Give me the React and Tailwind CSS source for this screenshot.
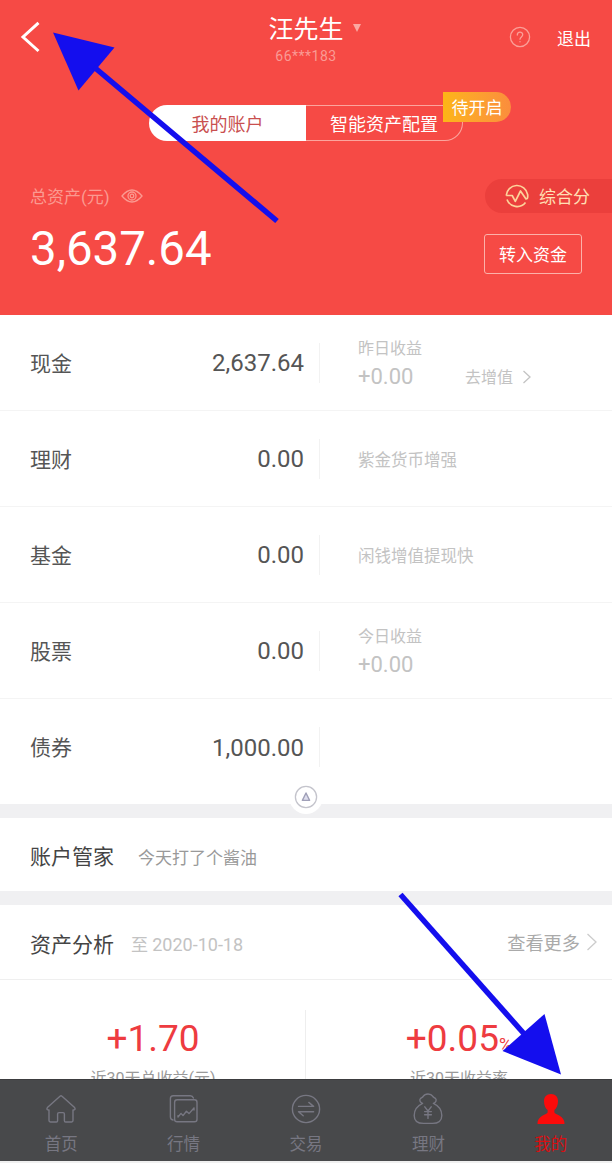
import clsx from 'clsx'

const rows = [
  { name: '现金', amount: '2,637.64', label: '昨日收益', gain: '+0.00', action: '去增值' },
  { name: '理财', amount: '0.00', note: '紫金货币增强' },
  { name: '基金', amount: '0.00', note: '闲钱增值提现快' },
  { name: '股票', amount: '0.00', label: '今日收益', gain: '+0.00' },
  { name: '债券', amount: '1,000.00' }
]

const tabs = [
  { label: '首页', Icon: HomeIcon },
  { label: '行情', Icon: MarketIcon },
  { label: '交易', Icon: TradeIcon },
  { label: '理财', Icon: MoneyBagIcon },
  { label: '我的', Icon: UserIcon, active: true }
]

function HomeIcon() {
  return (
    <svg width="32" height="32" viewBox="0 0 32 32" fill="none" stroke="currentColor" strokeWidth="1.4" strokeLinejoin="round">
      <path d="M15 3.2 Q16 2.4 17 3.2 L29.6 14.6 Q31 16.8 28.6 17 H28 V27.6 Q28 29 26.6 29 H20.6 Q19.4 29 19.4 27.8 V21 Q19.4 19.6 18 19.6 H14 Q12.6 19.6 12.6 21 V27.8 Q12.6 29 11.4 29 H5.4 Q4 29 4 27.6 V17 H3.4 Q1 16.8 2.4 14.6 Z" />
    </svg>
  )
}

function MarketIcon() {
  return (
    <svg width="32" height="32" viewBox="0 0 32 32" fill="none" stroke="currentColor" strokeWidth="1.4" strokeLinecap="round" strokeLinejoin="round">
      <rect x="6.6" y="6.8" width="22.4" height="22" rx="2.6" />
      <path d="M5 27 Q2.4 26.4 2.4 24 V5.6 Q2.4 2.8 5.2 2.8 H22.4 Q24.6 2.8 25.4 5" />
      <path d="M10 24 L13 20.4 L15 22.6 L18.4 18.2 L21 20.6 L26 15 M26 15 L26 17 M10 24 V22.6" />
    </svg>
  )
}

function TradeIcon() {
  return (
    <svg width="32" height="32" viewBox="0 0 32 32" fill="none" stroke="currentColor" strokeWidth="1.4" strokeLinecap="round" strokeLinejoin="round">
      <circle cx="16" cy="16" r="13.6" />
      <path d="M8.5 13.4 H23.6 L18.8 9.4" />
      <path d="M23.6 18.8 H8.5 L13.2 22.8" />
    </svg>
  )
}

function MoneyBagIcon() {
  return (
    <svg width="32" height="32" viewBox="0 0 32 32" fill="none" stroke="currentColor" strokeWidth="1.4" strokeLinecap="round" strokeLinejoin="round">
      <path d="M10.6 10.4 C8 9.4 7.2 7 8.4 5.6 C9.4 4.4 10.6 4.6 11.4 3.2 C12.4 1.4 13.6 1 16 1 C18.4 1 19.6 1.4 20.6 3.2 C21.4 4.6 22.6 4.4 23.6 5.6 C24.8 7 24 9.4 21.4 10.4 C26.5 12.8 29.8 17.6 29.8 22.4 C29.8 27.6 26.5 30.4 20.5 30.4 H11.5 C5.5 30.4 2.2 27.6 2.2 22.4 C2.2 17.6 5.5 12.8 10.6 10.4 Z" />
      <path d="M12.8 13.8 L16 18 L19.2 13.8 M16 18 V25.4 M12.6 18.6 H19.4 M12.6 21.8 H19.4" />
    </svg>
  )
}

function UserIcon() {
  return (
    <svg width="32" height="32" viewBox="0 0 32 32" fill="currentColor">
      <path d="M16 1 C20.5 1 23 4 23 8 C23 12 21.8 15.2 19.4 17 V19.4 C20 21.6 29.4 22 29.6 30.6 Q29.6 31 29 31 H3 Q2.4 31 2.4 30.6 C2.6 22 12 21.6 12.6 19.4 V17 C10.2 15.2 9 12 9 8 C9 4 11.5 1 16 1 Z" />
    </svg>
  )
}

function Header() {
  return (
    <header className="h-[315px] bg-[#f64a45] text-white">
      <div className="flex h-[74px] items-center">
        <div className="w-[204px] pl-5">
          <svg width="20" height="32" viewBox="0 0 20 32" fill="none" stroke="currentColor" strokeWidth="3">
            <path d="M18.5 1.8 L3 16 L18.5 30" />
          </svg>
        </div>
        <div className="flex w-[204px] flex-col items-center">
          <div className="relative mt-[5px] text-[25px] leading-8">
            汪先生
            <svg className="absolute top-[9px] left-[84px] text-[#fba8a1]" width="10" height="10" viewBox="0 0 10 10" fill="currentColor">
              <path d="M1 1 H9 L5 9 Z" />
            </svg>
          </div>
          <div className="text-sm leading-5 tracking-[0.5px] text-[#fa9a94]">66***183</div>
        </div>
        <div className="flex flex-1 items-center justify-end pr-[21px]">
          <svg className="mr-[26px] text-[#fb9f98]" width="22" height="22" viewBox="0 0 22 22" fill="none" stroke="currentColor" strokeWidth="1.3" strokeLinecap="round">
            <circle cx="11" cy="11" r="9.6" />
            <path d="M8.3 9 C8.3 5.3 13.7 5.3 13.7 8.8 C13.7 10.8 11 11 11 13.2 M11 15.6 V15.8" />
          </svg>
          <span className="pt-[3px] text-[17px] leading-6">退出</span>
        </div>
      </div>

      {/* Account switch */}
      <div className="mt-[31px] flex justify-center">
        <div className="relative flex h-9 w-[314px] text-lg">
          <div className="flex w-[157px] items-center justify-center rounded-l-full bg-white pt-[3px] text-[#c94f4f]">我的账户</div>
          <div className="flex w-[157px] items-center justify-center rounded-r-full border border-l-0 border-[#fba59d] pt-[3px]">智能资产配置</div>
          <div className="absolute -top-[13px] left-[294px] flex h-[30px] w-[68px] items-center justify-center rounded-tl-md rounded-r-full bg-linear-to-r from-[#fdb515] to-[#fb8d3c] pt-[2px] text-[17px]">
            待开启
          </div>
        </div>
      </div>

      {/* Total assets */}
      <div className="mt-[38px] flex justify-between pl-[30px]">
        <div>
          <div className="flex h-[34px] items-center text-[#fb9a91]">
            <span className="pt-[3px] text-[17px]">总资产(元)</span>
            <svg className="ml-[11px]" width="22" height="14" viewBox="0 0 22 14" fill="none" stroke="currentColor" strokeWidth="1.3">
              <path d="M1 7 Q11 -5 21 7 Q11 19 1 7 Z" />
              <circle cx="11" cy="7" r="4" />
              <circle cx="11" cy="7" r="1.8" />
            </svg>
          </div>
          <div className="mt-[8px] text-[47.4px] leading-[56px]">3,637.64</div>
        </div>
        <div className="flex flex-col items-end">
          <div className="flex h-[34px] w-[127px] items-center rounded-l-full bg-[#eb3f3c] pl-5 text-[17px] text-[#ffe0b5]">
            <svg className="mr-[10px] text-[#fdd39a]" width="24" height="24" viewBox="0 0 24 24" fill="none" stroke="currentColor" strokeWidth="1.7" strokeLinejoin="round">
              <path d="M1.2 11.5 A10.8 10.8 0 0 1 22.6 10.4 Q23 12.5 22.3 14.5 L21 15 L15.5 7 L10.3 17.3 L7.2 11.5 H1.2" />
              <path d="M2 15.5 A10.8 10.8 0 0 0 20.5 18.5" />
            </svg>
            <span className="pt-[4px]">综合分</span>
          </div>
          <div className="mt-[21px] mr-[30px] flex h-10 w-[98px] items-center justify-center rounded-[3px] border border-[#fcb1a9] pt-[3px] text-[17px]">
            转入资金
          </div>
        </div>
      </div>
    </header>
  )
}

function AssetRow({ row, last }) {
  return (
    <div className={clsx('flex h-24 items-center pl-[30px]', !last && 'border-b border-[#f4f4f4]')}>
      <div className="w-[100px] pt-[4px] text-[21px] text-[#555]">{row.name}</div>
      <div className="w-[174px] pt-px text-right text-2xl text-[#555]">{row.amount}</div>
      <div className="ml-[15px] h-10 w-px bg-[#f2f2f2]" />
      <div className="ml-[38px] flex-1 text-[#c3c3c3]">
        {row.note && <div className="pt-[5px] text-[16.5px]">{row.note}</div>}
        {row.label && <div className="pt-px text-base leading-7">{row.label}</div>}
        {row.gain && (
          <div className="flex items-center leading-7">
            <span className="w-[107px] text-[22px]">{row.gain}</span>
            {row.action && (
              <>
                <span className="pt-px text-base">{row.action}</span>
                <svg className="ml-[9px]" width="10" height="14" viewBox="0 0 10 14" fill="none" stroke="currentColor" strokeWidth="1.3">
                  <path d="M1.5 1 L8 7 L1.5 13" />
                </svg>
              </>
            )}
          </div>
        )}
      </div>
    </div>
  )
}

function Stat({ value, unit, label }) {
  return (
    <div className="flex flex-1 flex-col items-center pt-[37px]">
      <div className="flex h-[44px] items-baseline text-[37px] leading-[44px] text-[#ee3b40]">
        {value}
        {unit && <span className="text-[18px] leading-none">{unit}</span>}
      </div>
      <div className="mt-[6px] text-base leading-6 whitespace-nowrap text-[#999]">{label}</div>
    </div>
  )
}

export default function App() {
  return (
    <div className="relative flex h-[1163px] w-[612px] flex-col overflow-hidden bg-white font-[Roboto,'Noto_Sans_CJK_SC',sans-serif]">
      <Header />

      {/* Asset list */}
      <section className="relative h-[489px] shrink-0">
        {rows.map((row, i) => (
          <AssetRow key={row.name} row={row} last={i === rows.length - 1} />
        ))}
        <div className="absolute -bottom-[10px] left-[289px] flex h-[34px] w-[34px] items-center justify-center rounded-full bg-white">
          <svg width="24" height="24" viewBox="0 0 24 24" fill="none">
            <circle cx="12" cy="12" r="10.6" stroke="#c4c4cc" strokeWidth="1.3" />
            <path d="M12 8 L15.6 15.4 H8.4 Z" fill="#dedeee" stroke="#a0a0b8" strokeWidth="1.4" strokeLinejoin="round" />
          </svg>
        </div>
      </section>

      <div className="h-[14px] shrink-0 bg-[#f0f0f2]" />

      <section className="flex h-[73px] shrink-0 items-center pt-[7px] pl-[30px]">
        <h2 className="text-[21px] text-[#444]">账户管家</h2>
        <span className="ml-6 pt-px text-[17px] text-[#999]">今天打了个酱油</span>
      </section>

      <div className="h-[14px] shrink-0 bg-[#f0f0f2]" />

      {/* Asset analysis */}
      <section className="flex h-[75px] shrink-0 items-center border-b border-[#efefef] pr-[14px] pl-[30px]">
        <h2 className="pt-[7px] text-[21px] text-[#444]">资产分析</h2>
        <span className="ml-[17px] pt-[5px] text-[17px] text-[#c3c3c3]">
          至 <span className="text-[18px]">2020-10-18</span>
        </span>
        <span className="ml-auto pt-[4px] text-[18.2px] text-[#aaa]">查看更多</span>
        <svg className="ml-[6px] text-[#ccc]" width="12" height="18" viewBox="0 0 12 18" fill="none" stroke="currentColor" strokeWidth="1.3">
          <path d="M1.5 1 L10 9 L1.5 17" />
        </svg>
      </section>
      <section className="flex h-[99px] shrink-0 overflow-hidden">
        <Stat value="+1.70" label="近30天总收益(元)" />
        <div className="mt-[30px] -ml-px w-px bg-[#eee]" />
        <Stat value="+0.05" unit="%" label="近30天收益率" />
      </section>

      {/* Bottom navigation */}
      <nav className="flex h-[82px] shrink-0 border-t border-[#3c3d3f] bg-[#48494b]">
        {tabs.map(({ label, Icon, active }) => (
          <div key={label} className={clsx('flex flex-1 flex-col items-center pt-[13px]', active ? 'text-[#fb0b0b]' : 'text-[#777782]')}>
            <Icon />
            <span className={clsx('mt-[8px] text-[16.5px] leading-6', active && 'text-[#d80f12]')}>{label}</span>
          </div>
        ))}
      </nav>
      <div className="h-[2px] shrink-0 bg-[#f0f0f0]" />

      {/* Pointer arrows drawn over the screen */}
      <svg className="pointer-events-none absolute inset-0" width="612" height="1163" viewBox="0 0 612 1163" fill="#140eee" stroke="none">
        <path d="M53 32.5 L114.5 47.5 L78.5 90.5 Z" />
        <path d="M94 67 L277 221" stroke="#140eee" strokeWidth="5.5" />
        <path d="M561 1074.5 L544.5 1014 L502.5 1051 Z" />
        <path d="M400.5 894.5 L526 1036" stroke="#140eee" strokeWidth="5.5" />
      </svg>
    </div>
  )
}
